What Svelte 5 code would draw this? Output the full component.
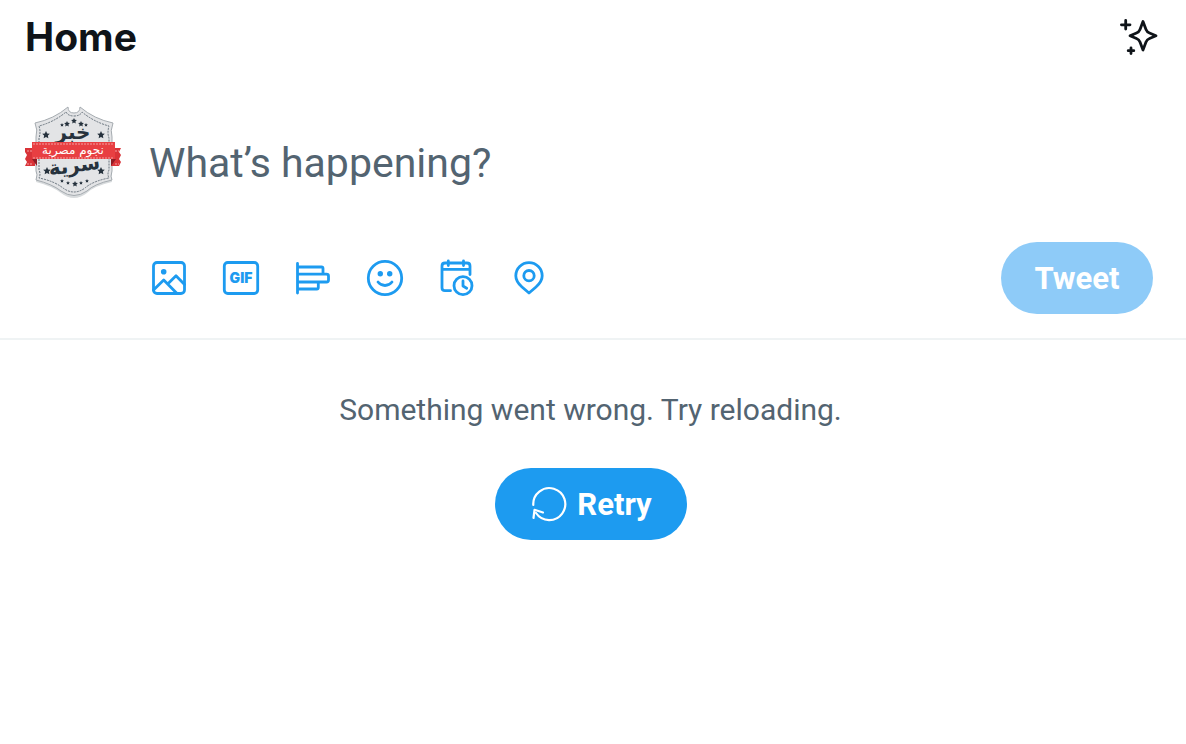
<script lang="ts">
	let draft = '';
	let loading = false;

	const stars = [
		[21, 30, 4], [76, 30, 4], [22, 66, 4], [76, 66, 4],
		[37, 20, 2], [42, 19, 3], [49, 16, 3], [56, 19, 3], [61, 20, 2],
		[37, 76, 2], [43, 78, 2], [50, 79, 3], [56, 78, 2], [62, 76, 2]
	];

	function starPoints(x: number, y: number, r: number) {
		let points = '';
		for (let i = 0; i < 10; i++) {
			const angle = (Math.PI / 5) * i - Math.PI / 2;
			const radius = i % 2 ? r * 0.5 : r;
			points += `${x + radius * Math.cos(angle)},${y + radius * Math.sin(angle)} `;
		}
		return points;
	}

	function retry() {
		loading = true;
		setTimeout(() => (loading = false), 500);
	}
</script>

<svelte:head>
	<title>Home</title>
</svelte:head>

<main>
	<header>
		<h1>Home</h1>
		<button class="icon dark" type="button" aria-label="Top Tweets">
			<svg viewBox="0 0 40 40">
				<path d="M24 4.500L27 12.500Q28 15 30.500 16L37 18.700L30.500 21.500Q28 22.500 27 25L24 33L21 25Q20 22.500 17.500 21.500L11 18.700L17.500 16Q20 15 21 12.500Z" />
				<path d="M6.700 3.500V12.100M2.400 7.800H11M12 31V36.500M9.200 33.700H14.800" />
			</svg>
		</button>
	</header>

	<form class="composer" on:submit|preventDefault>
		<a class="avatar" href="/profile" aria-label="Profile">
			<svg viewBox="0 0 96 96">
				<path d="M43 5Q49 13 55 5Q69 16 87 20Q85 28 87 34V67Q86 73 87 77Q69 81 62 88Q49 98 36 88Q27 81 11 77Q13 71 11 67V34Q13 27 11 20Q29 16 43 5Z" fill="#d8dbdd" />
				<path d="M43 2Q43 8 49 8T55 2Q69 14 88 18Q85 26 87 32V66Q85 72 87 75Q69 79 62 86Q49 95 36 86Q27 79 11 75Q13 69 11 66V32Q13 25 10 18Q29 14 43 2Z" fill="#e3e4e6" stroke="#a5abb0" />
				<path d="M41 7Q43 11 49 11T57 7Q69 17 84 21Q82 28 84 33V65Q82 69 84 73Q68 76 60 83Q49 91 38 83Q29 76 14 73Q16 69 14 65V33Q16 27 14 21Q29 17 41 7Z" fill="none" stroke="#68737d" stroke-dasharray="2 1" />
				{#each stars as [x, y, r]}
					<polygon points={starPoints(x, y, r)} fill="#26323d" />
				{/each}
				<text class="script" x="48" y="34">خبر</text>
				<text class="script" x="50" y="67" transform="rotate(-8 50 67)">سرية</text>
				<path d="M0 43H10V61H0L2 57L0 54L2 50L0 47ZM86 43H96L94 47L96 50L94 54L96 57L94 61H86Z" fill="#d93338" />
				<path d="M7 54H12V61ZM86 54H91L86 61Z" fill="#8e1c25" />
				<path d="M7 37H90V54H7Z" fill="#e83f42" />
				<path d="M8 39H89M8 53H89M2 46H7M2 59H7M90 46H94M90 59H94" stroke="#f3a0a0" stroke-dasharray="2 1" />
				<text class="ribbon" x="48" y="49">نجوم مصرية</text>
			</svg>
		</a>

		<div class="body">
			<input bind:value={draft} aria-label="Tweet text" placeholder="What’s happening?" />

			<div class="toolbar">
				<div class="tools">
					<button class="icon" type="button" aria-label="Media">
						<svg viewBox="0 0 40 40">
							<rect x="4.500" y="4.500" width="31" height="31" rx="3.500" />
							<path d="M4.500 32L14.700 22L28 35.500M18.700 26L27 17.800L35.500 26.500" />
							<circle class="fill" cx="14.700" cy="13.700" r="2.800" />
						</svg>
					</button>
					<button class="icon" type="button" aria-label="GIF">
						<svg viewBox="0 0 40 40">
							<rect x="3.300" y="4.500" width="33.400" height="31" rx="3.500" />
							<text class="gif" x="20" y="25">GIF</text>
						</svg>
					</button>
					<button class="icon" type="button" aria-label="Poll">
						<svg viewBox="0 0 40 40">
							<path d="M4.500 5.500V35M4.500 9H28.500Q30 9 30 10.500V16M4.500 16.200H33.500Q35.500 16.200 35.500 18V22Q35.500 24 33.500 24H4.500M25.300 24V29.500Q25.300 31 23.800 31H4.500" />
						</svg>
					</button>
					<button class="icon" type="button" aria-label="Emoji">
						<svg viewBox="0 0 40 40">
							<circle cx="20" cy="20" r="16.700" />
							<circle class="fill" cx="15.300" cy="15.800" r="2.700" />
							<circle class="fill" cx="24.700" cy="15.800" r="2.700" />
							<path d="M13 24Q15.800 27.500 20 27.500T27 24" />
						</svg>
					</button>
					<button class="icon" type="button" aria-label="Schedule">
						<svg viewBox="0 0 40 40">
							<path d="M13.500 32.700H8Q5 32.700 5 29.700V8Q5 5 8 5H30Q33 5 33 8V16.500M5 11.300H33M11.300 3V7.500M26.500 3V7.500" />
							<circle cx="26" cy="27.700" r="9" />
							<path d="M26 23V28L29.700 30.200" />
						</svg>
					</button>
					<button class="icon" type="button" aria-label="Location">
						<svg viewBox="0 0 40 40">
							<path d="M20 35L13 29C9 25.500 6.800 22 6.800 17.800A13.200 13.200 0 0 1 33.200 17.800C33.200 22 31 25.500 27 29Z" />
							<circle cx="20" cy="17.700" r="5.200" />
						</svg>
					</button>
				</div>
				<button class="pill tweet" disabled={!draft}>Tweet</button>
			</div>
		</div>
	</form>

	<section class="error">
		<p>Something went wrong. Try reloading.</p>
		<button class="pill retry" type="button" on:click={retry} disabled={loading}>
			<svg viewBox="0 0 40 40">
				<path d="M4.300 21A16 16 0 1 1 7 29" />
				<path d="M4.500 34L5.500 25.800L14 28.500" />
			</svg>
			<span>Retry</span>
		</button>
	</section>
</main>

<style>
	:global(body) {
		margin: 0;
		background: #fff;
	}

	main {
		font-family: Roboto, 'Liberation Sans', sans-serif;
		color: #0f1419;
	}

	header {
		display: flex;
		align-items: center;
		justify-content: space-between;
		height: 74px;
		padding: 0 27px 0 25px;
	}

	h1 {
		margin: 0;
		font: 700 39px/48px Inter, sans-serif;
	}

	button {
		padding: 0;
		border: 0;
		font-family: inherit;
		cursor: pointer;
	}

	svg {
		display: block;
		width: 40px;
		height: 40px;
		fill: none;
		stroke: currentColor;
		stroke-width: 2.8px;
		stroke-linecap: round;
		stroke-linejoin: round;
	}

	.icon {
		background: none;
		color: #1d9bf0;
	}

	.dark {
		color: #0f1419;
	}

	.fill {
		fill: currentColor;
		stroke: none;
	}

	.gif {
		font: 900 14px Inter, sans-serif;
		text-anchor: middle;
		fill: currentColor;
		stroke: none;
	}

	.composer {
		display: flex;
		gap: 28px;
		padding: 31px 33px 24px 25px;
		border-bottom: 2px solid #eff3f4;
	}

	.avatar svg {
		width: 96px;
		height: 96px;
		stroke: none;
		stroke-width: 1px;
		stroke-linecap: butt;
	}

	.script,
	.ribbon {
		font-family: 'DejaVu Sans', sans-serif;
		text-anchor: middle;
	}

	.script {
		font-size: 20px;
		font-weight: 700;
		fill: #26323d;
	}

	.ribbon {
		font-size: 12px;
		fill: #fff;
	}

	.body {
		flex: 1;
		min-width: 0;
	}

	input {
		display: block;
		box-sizing: border-box;
		width: 100%;
		height: 113px;
		margin-bottom: 24px;
		padding: 2px 0 0;
		border: 0;
		outline: 0;
		background: none;
		color: #0f1419;
		font: 41px/48px Roboto, sans-serif;
	}

	input::placeholder {
		color: #536471;
		opacity: 1;
	}

	.toolbar,
	.tools {
		display: flex;
		align-items: center;
	}

	.toolbar {
		justify-content: space-between;
	}

	.tools {
		gap: 32px;
	}

	.pill {
		display: flex;
		align-items: center;
		justify-content: center;
		height: 72px;
		border-radius: 36px;
		background: #1d9bf0;
		color: #fff;
		font-size: 31px;
		font-weight: 700;
	}

	.tweet {
		width: 152px;
	}

	.tweet:disabled {
		background: #8ecbf8;
		cursor: default;
	}

	.retry {
		gap: 8px;
		width: 192px;
	}

	.retry svg {
		stroke-width: 2.2px;
	}

	.error {
		display: flex;
		flex-direction: column;
		align-items: center;
		gap: 38px;
		padding: 50px 5px 40px 0;
	}

	p {
		margin: 0;
		color: #536471;
		font-size: 30px;
		line-height: 40px;
	}
</style>
